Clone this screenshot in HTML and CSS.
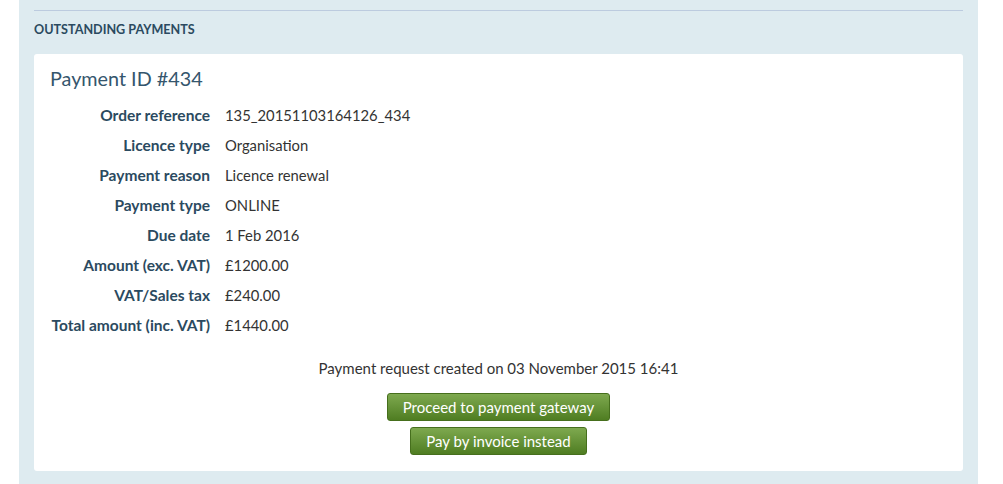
FILE: index.html
```html
<!DOCTYPE html>
<html lang="en">
<head>
    <meta charset="UTF-8">
    <title>Outstanding Payments</title>
    <link rel="stylesheet" href="styles.css">
</head>
<body>

<div class="panel">
    <h3 class="panel-title">Outstanding payments</h3>
    <div class="card">
        <h2 class="card-title">Payment ID #434</h2>
        <dl class="details">
            <dt>Order reference</dt><dd>135_20151103164126_434</dd>
            <dt>Licence type</dt><dd>Organisation</dd>
            <dt>Payment reason</dt><dd>Licence renewal</dd>
            <dt>Payment type</dt><dd>ONLINE</dd>
            <dt>Due date</dt><dd>1 Feb 2016</dd>
            <dt>Amount (exc. VAT)</dt><dd>£1200.00</dd>
            <dt>VAT/Sales tax</dt><dd>£240.00</dd>
            <dt>Total amount (inc. VAT)</dt><dd>£1440.00</dd>
        </dl>
        <p class="created">Payment request created on 03 November 2015 16:41</p>
        <div class="actions">
            <button type="button" class="btn">Proceed to payment gateway</button>
            <button type="button" class="btn">Pay by invoice instead</button>
        </div>
    </div>
</div>

</body>
</html>
```

FILE: styles.css
```css
html, body {
    height: 100%;
}
body {
    margin: 0;
    font-family: Lato, "Open Sans", sans-serif;
    font-size: 15px;
    color: #333;
    background-color: #fff;
}
.panel {
    box-sizing: border-box;
    width: 959px;
    min-height: 100%;
    margin-left: 19px;
    padding: 10px 15px 13px;
    background-color: #deebf0;
}
.panel-title {
    margin: 0;
    padding: 10px 0 0;
    height: 44px;
    box-sizing: border-box;
    border-top: 1px solid #bccbdf;
    font-size: 12.6px;
    line-height: 18px;
    font-weight: bold;
    text-transform: uppercase;
    color: #2b4a60;
}
.card {
    background-color: #fff;
    border-radius: 3px;
    padding: 12px 16px 16px;
}
.card-title {
    margin: 0;
    font-size: 19.8px;
    line-height: 24px;
    font-weight: normal;
    color: #35566d;
}
.details {
    display: grid;
    grid-template-columns: 160px 1fr;
    column-gap: 15px;
    margin: 10px 0 0;
    line-height: 30px;
}
.details dt {
    text-align: right;
    font-size: 15.5px;
    font-weight: bold;
    color: #2b4a60;
    white-space: nowrap;
}
.details dd {
    margin: 0;
    font-size: 14.8px;
}
.created {
    margin: 18px 0 0;
    line-height: 20px;
    text-align: center;
}
.actions {
    display: flex;
    flex-direction: column;
    align-items: center;
    gap: 6px;
    margin-top: 15px;
}
.btn {
    height: 28px;
    padding: 0 15px;
    font-family: Lato, "Open Sans", sans-serif;
    font-size: 15px;
    color: #fff;
    background: linear-gradient(#7ea94f, #4f7d22);
    border: 1px solid #466f1d;
    border-radius: 3px;
    cursor: pointer;
}
.btn:hover {
    background: linear-gradient(#6f9a40, #426e18);
}
```
